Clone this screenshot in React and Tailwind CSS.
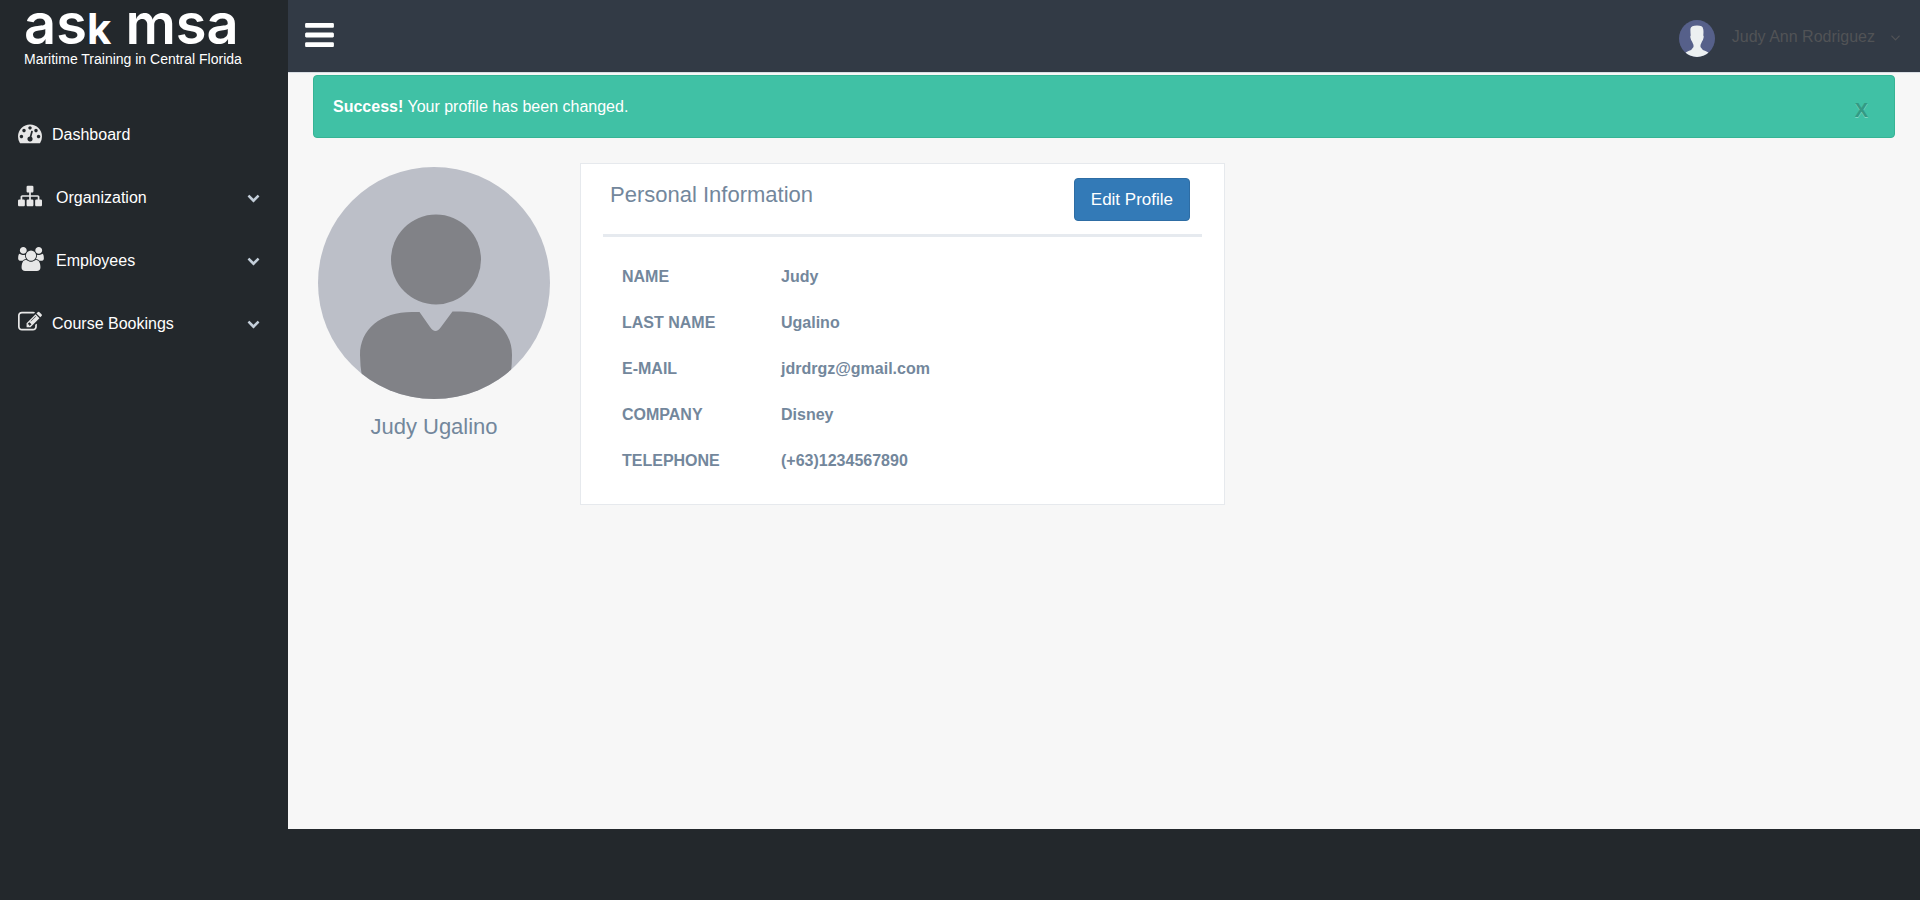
const ICONS = {
  dashboard: {
    box: "0 0 1792 1792",
    size: "h-6 w-6",
    d: "M384 1152q0-53-37.5-90.5t-90.5-37.5-90.5 37.5-37.5 90.5 37.5 90.5 90.5 37.5 90.5-37.5 37.5-90.5zm192-448q0-53-37.5-90.5t-90.5-37.5-90.5 37.5-37.5 90.5 37.5 90.5 90.5 37.5 90.5-37.5 37.5-90.5zm428 481l101-382q6-26-7.5-48.5t-38.5-29.5-48 6.5-30 39.5l-101 382q-60 5-107 43.5t-63 98.5q-20 77 20 146t117 89 146-20 89-117q16-60-6-117t-72-91zm660-33q0-53-37.5-90.5t-90.5-37.5-90.5 37.5-37.5 90.5 37.5 90.5 90.5 37.5 90.5-37.5 37.5-90.5zm-640-640q0-53-37.5-90.5t-90.5-37.5-90.5 37.5-37.5 90.5 37.5 90.5 90.5 37.5 90.5-37.5 37.5-90.5zm448 192q0-53-37.5-90.5t-90.5-37.5-90.5 37.5-37.5 90.5 37.5 90.5 90.5 37.5 90.5-37.5 37.5-90.5zm320 448q0 261-141 483-19 29-54 29h-1402q-35 0-54-29-141-221-141-483 0-182 71-348t191-286 286-191 348-71 348 71 286 191 191 286 71 348z",
  },
  organization: {
    box: "0 0 1792 1792",
    size: "h-6 w-6",
    d: "M1792 1248v320q0 40-28 68t-68 28h-320q-40 0-68-28t-28-68v-320q0-40 28-68t68-28h96v-192h-512v192h96q40 0 68 28t28 68v320q0 40-28 68t-68 28h-320q-40 0-68-28t-28-68v-320q0-40 28-68t68-28h96v-192h-512v192h96q40 0 68 28t28 68v320q0 40-28 68t-68 28h-320q-40 0-68-28t-28-68v-320q0-40 28-68t68-28h96v-192q0-52 38-90t90-38h512v-192h-96q-40 0-68-28t-28-68v-320q0-40 28-68t68-28h320q40 0 68 28t28 68v320q0 40-28 68t-68 28h-96v192h512q52 0 90 38t38 90v192h96q40 0 68 28t28 68z",
  },
  employees: {
    box: "0 0 1920 1792",
    size: "h-6 w-[26px]",
    d: "M593 896q-162 5-265 128h-134q-82 0-138-40.5t-56-118.5q0-353 124-353 6 0 43.5 21t97.5 42.5 119 21.5q67 0 133-23-5 37-5 66 0 139 81 256zm1071 637q0 120-73 189.5t-194 69.5h-874q-121 0-194-69.5t-73-189.5q0-53 3.5-103.5t14-109 26.5-108.5 43-97.5 62-81 85.5-53.5 111.5-20q10 0 43 21.5t73 48 107 48 135 21.5 135-21.5 107-48 73-48 43-21.5q61 0 111.5 20t85.5 53.5 62 81 43 97.5 26.5 108.5 14 109 3.5 103.5zm-1024-1277q0 106-75 181t-181 75-181-75-75-181 75-181 181-75 181 75 75 181zm704 384q0 159-112.5 271.5t-271.5 112.5-271.5-112.5-112.5-271.5 112.5-271.5 271.5-112.5 271.5 112.5 112.5 271.5zm576 225q0 78-56 118.5t-138 40.5h-134q-103-123-265-128 81-117 81-256 0-29-5-66 66 23 133 23 59 0 119-21.5t97.5-42.5 43.5-21q124 0 124 353zm-128-609q0 106-75 181t-181 75-181-75-75-181 75-181 181-75 181 75 75 181z",
  },
  bookings: {
    box: "0 0 1792 1792",
    size: "h-6 w-6",
    d: "M888 1184l116-116-152-152-116 116v56h96v96h56zm440-720q-16-16-33 1l-350 350q-17 17-1 33t33-1l350-350q17-17 1-33zm80 594v190q0 119-84.5 203.5t-203.5 84.5h-832q-119 0-203.5-84.5t-84.5-203.5v-832q0-119 84.5-203.5t203.5-84.5h832q63 0 117 25 15 7 18 23 3 17-9 29l-49 49q-14 14-32 8-23-6-45-6h-832q-66 0-113 47t-47 113v832q0 66 47 113t113 47h832q66 0 113-47t47-113v-126q0-13 9-22l64-64q15-15 35-7t20 29zm-96-738l288 288-672 672h-288v-288zm444 132l-92 92-288-288 92-92q28-28 68-28t68 28l152 152q28 28 28 68t-28 68z",
  },
  chevron: {
    box: "0 0 1792 1792",
    size: "h-[13px] w-[13px]",
    d: "M1683 808l-742 741q-19 19-45 19t-45-19l-742-741q-19-19-19-45.5t19-45.5l166-165q19-19 45-19t45 19l531 531 531-531q19-19 45-19t45 19l166 165q19 19 19 45.5t-19 45.5z",
  },
  bars: {
    box: "128 256 1536 1280",
    size: "h-6 w-[29px]",
    d: "M1664 1344v128q0 26-19 45t-45 19h-1408q-26 0-45-19t-19-45v-128q0-26 19-45t45-19h1408q26 0 45 19t19 45zm0-512v128q0 26-19 45t-45 19h-1408q-26 0-45-19t-19-45v-128q0-26 19-45t45-19h1408q26 0 45 19t19 45zm0-512v128q0 26-19 45t-45 19h-1408q-26 0-45-19t-19-45v-128q0-26 19-45t45-19h1408q26 0 45 19t19 45z",
  },
  angle: {
    box: "384 384 1024 1024",
    size: "h-[9px] w-[9px]",
    d: "M1395 736q0 13-10 23l-466 466q-10 10-23 10t-23-10l-466-466q-10-10-10-23t10-23l50-50q10-10 23-10t23 10l393 393 393-393q10-10 23-10t23 10l50 50q10 10 10 23z",
  },
};

function Icon({ name }) {
  const icon = ICONS[name];
  return (
    <svg viewBox={icon.box} className={`${icon.size} shrink-0`} fill="currentColor" aria-hidden="true">
      <path d={icon.d} />
    </svg>
  );
}

const NAV = [
  { label: "Dashboard", icon: "dashboard" },
  { label: "Organization", icon: "organization", expandable: true },
  { label: "Employees", icon: "employees", expandable: true },
  { label: "Course Bookings", icon: "bookings", expandable: true },
];

const DETAILS = [
  ["NAME", "Judy"],
  ["LAST NAME", "Ugalino"],
  ["E-MAIL", "jdrdrgz@gmail.com"],
  ["COMPANY", "Disney"],
  ["TELEPHONE", "(+63)1234567890"],
];

function Sidebar() {
  return (
    <aside className="w-72 shrink-0">
      <a href="#" className="flex h-[103px] flex-col pl-6 text-white">
        <span className="h-[50px] font-['Inter',sans-serif] text-[56px] leading-[48px] font-semibold whitespace-nowrap">
          as<span className="text-[42px] font-bold">k</span> msa
        </span>
        <span className="text-sm leading-[18px] whitespace-nowrap">Maritime Training in Central Florida</span>
      </a>
      <nav>
        <ul>
          {NAV.map((item) => (
            <li key={item.label}>
              <a href="#" className="flex h-[63px] items-center gap-2 pr-7 pl-[18px] text-white">
                <span className="flex w-[26px] pb-1 text-[#e7e7e7]">
                  <Icon name={item.icon} />
                </span>
                <span className={item.expandable && item.icon !== "bookings" ? "flex-1 pl-1" : "flex-1"}>
                  {item.label}
                </span>
                {item.expandable && (
                  <span className="text-[#c4cfda]">
                    <Icon name="chevron" />
                  </span>
                )}
              </a>
            </li>
          ))}
        </ul>
      </nav>
    </aside>
  );
}

function Header() {
  return (
    <header className="flex h-[73px] items-center justify-between border-b border-[#d9dee4] bg-[#323a45] pr-5 pl-[17px]">
      <button type="button" aria-label="Toggle navigation" className="-mt-[2px] text-white">
        <Icon name="bars" />
      </button>
      <button type="button" className="mt-[2px] flex items-center text-[#515356]">
        <svg viewBox="0 0 36 37" className="mt-[2px] mr-[17px] h-[37px] w-9" aria-hidden="true">
          <defs>
            <clipPath id="user-clip">
              <ellipse cx="18" cy="18.5" rx="18" ry="18.5" />
            </clipPath>
          </defs>
          <g clipPath="url(#user-clip)">
            <rect width="36" height="37" fill="#56608a" />
            <path
              d="M11.500 8.500Q12 5.500 18 5.500T24 8.500Q24.800 10 24.300 15.500Q25 16 24.500 18Q24 20.500 23 21.500Q22 23.500 21.500 25V27Q23 30 26.500 31Q29 32 31 34V38H5V34Q7 32 9.500 31Q13 30 14.500 27V25Q14 23.500 13 21.500Q12 20.500 11.500 18Q11 16 11.700 15.500Q11.200 10 11.500 8.500Z"
              fill="#ecf0f1"
            />
          </g>
        </svg>
        <span>Judy Ann Rodriguez</span>
        <span className="ml-4">
          <Icon name="angle" />
        </span>
      </button>
    </header>
  );
}

function Alert() {
  return (
    <div
      role="alert"
      className="flex h-[63px] items-center justify-between rounded-[4px] border border-[#36b495] bg-[#40c1a5] pr-[26px] pl-[19px] text-white"
    >
      <p>
        <strong>Success!</strong> Your profile has been changed.
      </p>
      <button
        type="button"
        aria-label="Close"
        className="pt-[6px] text-xl leading-6 font-bold text-[#339a84] [text-shadow:0_1px_0_#7fd6c3]"
      >
        X
      </button>
    </div>
  );
}

function ProfilePhoto() {
  return (
    <svg viewBox="0 0 232 232" className="h-[232px] w-[232px]" role="img" aria-label="Profile photo">
      <defs>
        <clipPath id="photo-clip">
          <circle cx="116" cy="116" r="116" />
        </clipPath>
      </defs>
      <g clipPath="url(#photo-clip)">
        <rect width="232" height="232" fill="#bcbfc8" />
        <circle cx="118" cy="92.500" r="45" fill="#818287" />
        <path
          d="M101.500 145L112 160Q117.500 168 123 160L134.500 144.500H142C173 145 194 162 194 188Q194 198 192.500 210V232H44V210Q42 198 42 188C42 162 63 145 94 145Z"
          fill="#818287"
        />
      </g>
    </svg>
  );
}

function PersonalInformation() {
  return (
    <section className="w-full max-w-[645px] border border-[#e6e9ed] bg-white px-[22px] pt-[14px] pb-5">
      <div className="flex h-[59px] items-start justify-between border-b-3 border-[#e6eaef] pr-3 pl-[7px]">
        <h2 className="text-[22px] leading-[34px]">Personal Information</h2>
        <button
          type="button"
          className="h-[43px] rounded-[4px] border border-[#2e6da4] bg-[#337ab7] px-4 text-[17px] leading-6 text-white"
        >
          Edit Profile
        </button>
      </div>
      <table className="mt-[17px] ml-[19px] text-left font-bold">
        <tbody>
          {DETAILS.map(([label, value]) => (
            <tr key={label} className="h-[46px]">
              <th scope="row" className="w-[159px] p-0">
                {label}
              </th>
              <td className="p-0">{value}</td>
            </tr>
          ))}
        </tbody>
      </table>
    </section>
  );
}

export default function App() {
  return (
    <div className="flex min-h-screen bg-[#23282c] font-['Liberation_Sans',Arial,sans-serif] text-base">
      <Sidebar />
      <div className="flex min-w-0 flex-1 flex-col">
        <Header />
        <main className="mb-[71px] flex-1 bg-[#f7f7f7] pt-[2px] pr-[25px] pl-[25px] text-[#73879c]">
          <Alert />
          <div className="mt-[25px] flex items-start">
            <div className="mr-[30px] ml-[5px] flex shrink-0 flex-col items-center pt-1">
              <ProfilePhoto />
              <h1 className="mt-[10px] text-[22px] leading-9">Judy Ugalino</h1>
            </div>
            <PersonalInformation />
          </div>
        </main>
      </div>
    </div>
  );
}
